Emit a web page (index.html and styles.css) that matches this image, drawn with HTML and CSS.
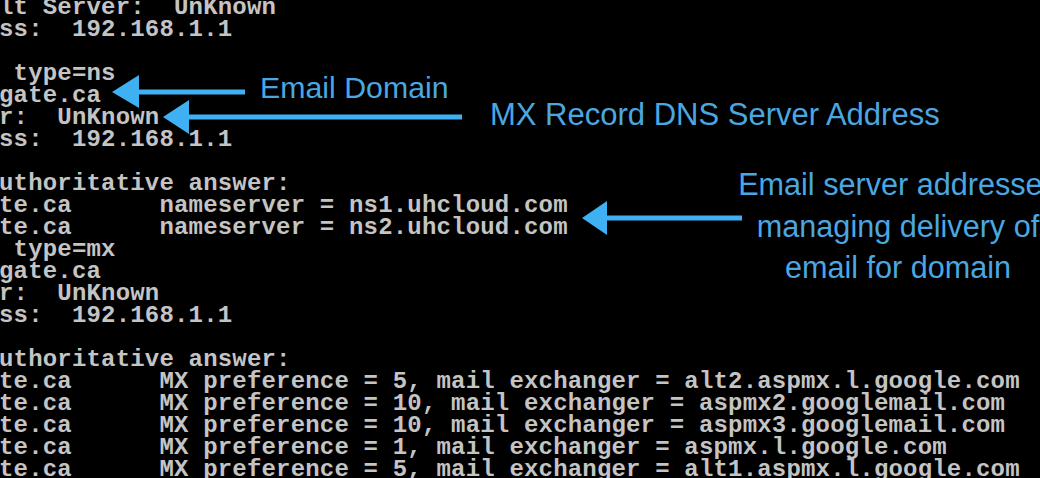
FILE: index.html
```html
<!DOCTYPE html>
<html lang="en">
<head>
<meta charset="utf-8">
<title>nslookup MX records</title>
<link rel="stylesheet" href="styles.css">
</head>
<body>
<div class="stage">
<pre class="terminal">lt Server:  UnKnown
ss:  192.168.1.1

 type=ns
gate.ca
r:  UnKnown
ss:  192.168.1.1

uthoritative answer:
te.ca      nameserver = ns1.uhcloud.com
te.ca      nameserver = ns2.uhcloud.com
 type=mx
gate.ca
r:  UnKnown
ss:  192.168.1.1

uthoritative answer:
te.ca      MX preference = 5, mail exchanger = alt2.aspmx.l.google.com
te.ca      MX preference = 10, mail exchanger = aspmx2.googlemail.com
te.ca      MX preference = 10, mail exchanger = aspmx3.googlemail.com
te.ca      MX preference = 1, mail exchanger = aspmx.l.google.com
te.ca      MX preference = 5, mail exchanger = alt1.aspmx.l.google.com</pre>

<svg class="arrows" width="1040" height="478" viewBox="0 0 1040 478" aria-hidden="true">
  <g fill="#3fb0f2" stroke="none">
    <rect x="136" y="89.5" width="109" height="5"/>
    <polygon points="112,92 139,75 139,108"/>
    <rect x="186" y="114.5" width="276" height="5"/>
    <polygon points="163,117 189,100 189,134"/>
    <rect x="604" y="215.5" width="138" height="5"/>
    <polygon points="582,218 607,201 607,235"/>
  </g>
</svg>

<div class="note note-domain">Email Domain</div>
<div class="note note-mx">MX Record DNS Server Address</div>
<div class="note note-servers">Email server addresses<br>managing delivery of<br>email for domain</div>
</div>
</body>
</html>
```

FILE: styles.css
```css
html, body {
  margin: 0;
  padding: 0;
  background: #000;
  overflow: hidden;
}

.stage {
  position: relative;
  width: 1040px;
  height: 478px;
  overflow: hidden;
  background: #000;
}

.terminal {
  margin: -3px 0 0 -1px;
  padding: 0;
  font-family: "Liberation Mono", "DejaVu Sans Mono", monospace;
  font-weight: bold;
  font-size: 24px;
  line-height: 22px;
  letter-spacing: 0.18px;
  color: #c4c4c4;
  white-space: pre;
}

.arrows {
  position: absolute;
  left: 0;
  top: 0;
}

.note {
  position: absolute;
  font-family: "Liberation Sans", Arial, sans-serif;
  font-size: 30.3px;
  line-height: 34px;
  color: #4ba7e0;
  white-space: nowrap;
}

.note-domain {
  left: 260px;
  top: 71px;
}

.note-mx {
  left: 490px;
  top: 98px;
  font-size: 31px;
}

.note-servers {
  left: 728px;
  top: 164px;
  width: 340px;
  font-size: 30.6px;
  text-align: center;
  line-height: 41.5px;
}
```
